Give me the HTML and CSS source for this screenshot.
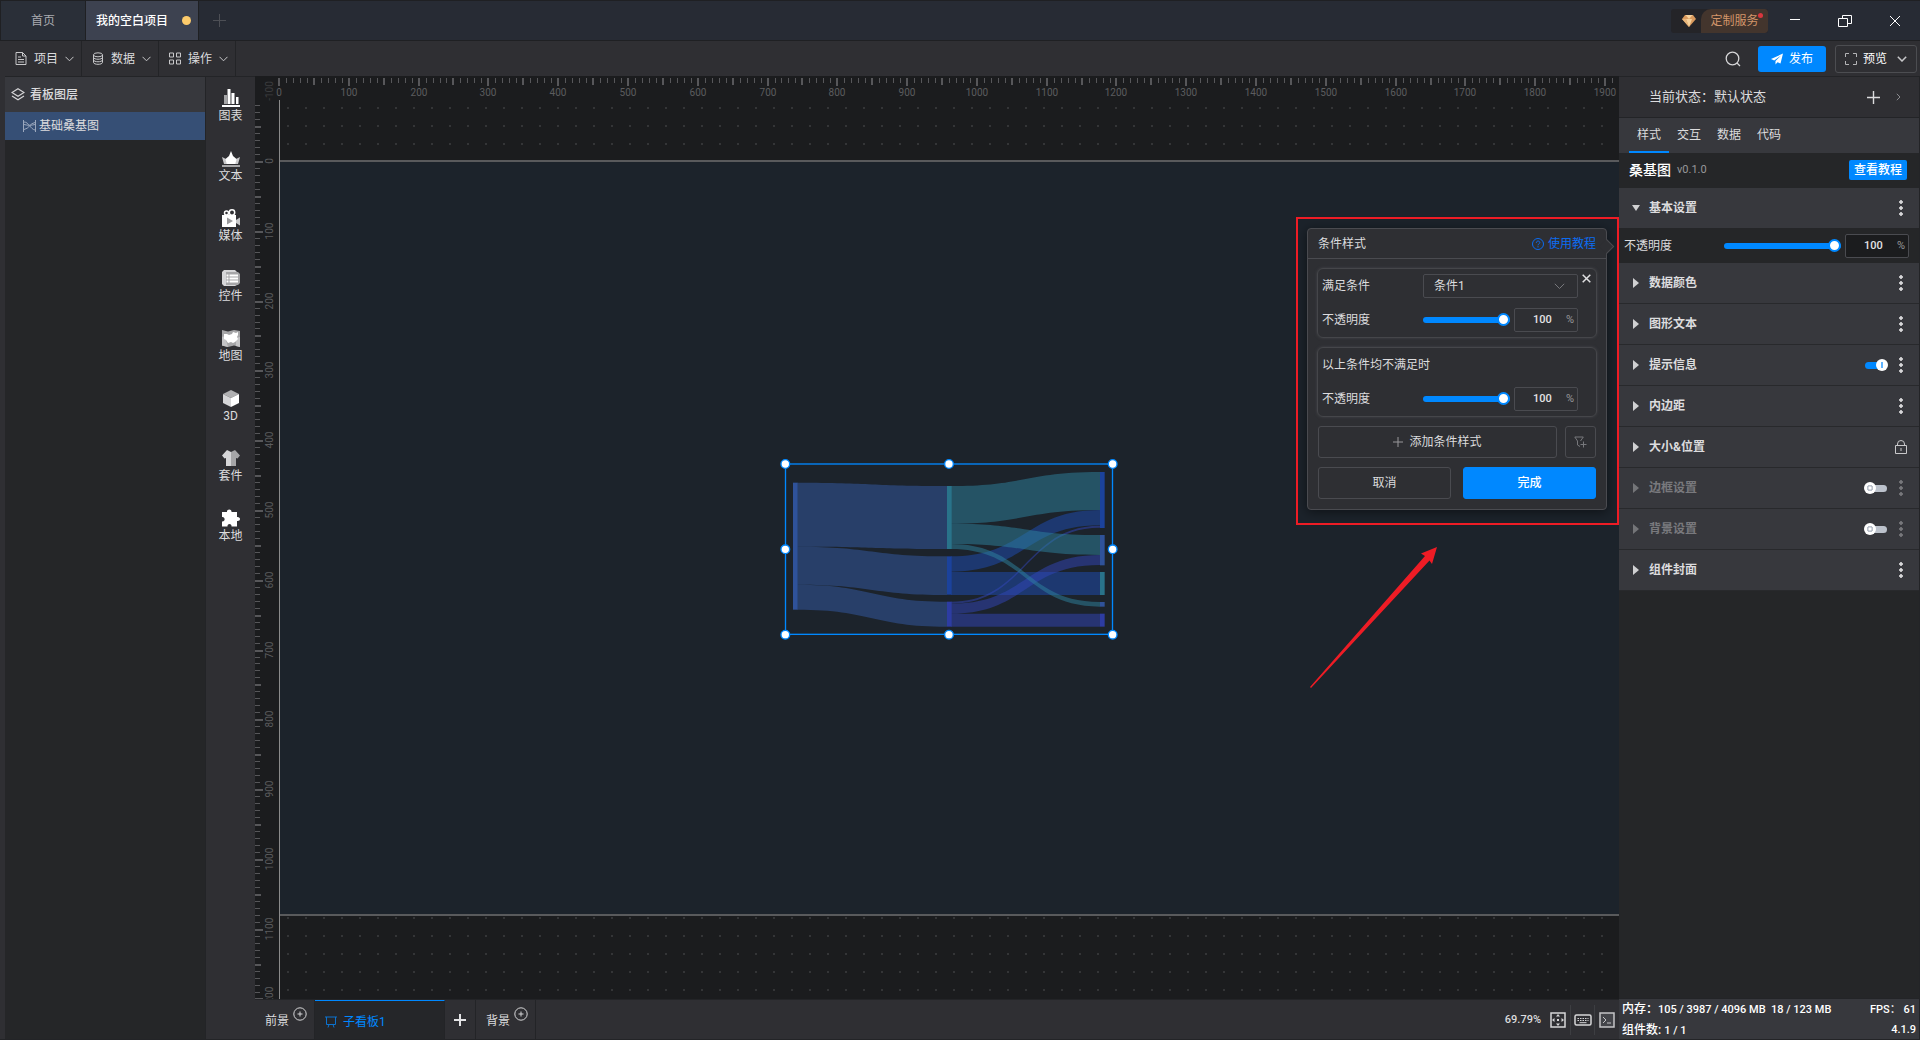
FILE: index.html
```html
<!DOCTYPE html>
<html lang="zh-CN">
<head>
    <meta charset="UTF-8">
    <meta name="viewport" content="width=device-width, initial-scale=1.0">
    <title>我的空白项目</title>
    <link rel="stylesheet" href="styles.css">
</head>
<body>
    <header class="titlebar">
        <button class="file-tab">首页</button>
        <button class="file-tab active">我的空白项目<span class="unsaved"></span></button>
        <button class="new-tab" aria-label="新建">
            <svg width="13" height="13" viewBox="0 0 13 13"><path d="M6.5 0v13M0 6.5h13" stroke="#4d4f55" fill="none"/></svg>
        </button>
        <div class="spacer"></div>
        <button class="service">
            <span class="service-gem">
                <svg width="14" height="12" viewBox="0 0 14 12"><path d="M3 0h8l3 4-7 8-7-8z" fill="#d99a5e"/><path d="M3.500 0h7L7 4zM4 4h6l-3 8z" fill="#f7d29c"/><path d="M0 4h4l3 8z" fill="#e8b67c"/></svg>
            </span>
            <span class="service-text">定制服务</span>
            <span class="service-dot"></span>
        </button>
        <button class="win-btn" aria-label="最小化">
            <svg width="14" height="14" viewBox="0 0 14 14"><path d="M2 5.500h10" stroke="#fff"/></svg>
        </button>
        <button class="win-btn" aria-label="还原">
            <svg width="14" height="14" viewBox="0 0 14 14" fill="none" stroke="#fff"><path d="M.5 4.500h9v8h-9zM4.500 4.500v-3h9v8h-4"/></svg>
        </button>
        <button class="win-btn" aria-label="关闭">
            <svg width="14" height="14" viewBox="0 0 14 14"><path d="M2 2l10 10M12 2L2 12" stroke="#fff"/></svg>
        </button>
    </header>

    <nav class="toolbar">
        <button class="menu-btn">
            <svg width="12" height="13" viewBox="0 0 12 13" fill="none" stroke="#c8c8ca"><path d="M1 .5h6.500L11 4v8.500H1zM7.500.5V4H11M3 5h3M3 7.500h6M3 10h6"/></svg>
            项目
            <svg class="chev" width="9" height="6" viewBox="0 0 9 6"><path d="M.5.8l4 4 4-4"/></svg>
        </button>
        <button class="menu-btn">
            <svg width="12" height="13" viewBox="0 0 12 13" fill="none" stroke="#c8c8ca"><ellipse cx="6" cy="2.800" rx="4.500" ry="2"/><path d="M1.500 2.800v7.500c0 2.700 9 2.700 9 0V2.800M1.500 5.300c0 2.600 9 2.600 9 0M1.500 7.800c0 2.600 9 2.600 9 0"/></svg>
            数据
            <svg class="chev" width="9" height="6" viewBox="0 0 9 6"><path d="M.5.8l4 4 4-4"/></svg>
        </button>
        <button class="menu-btn">
            <svg width="12" height="13" viewBox="0 0 12 13" fill="none" stroke="#c8c8ca"><path d="M.5 1h4v4h-4zM7.500 1h4v4h-4zM.5 8h4v4h-4zM7.500 8h4v4h-4z"/></svg>
            操作
            <svg class="chev" width="9" height="6" viewBox="0 0 9 6"><path d="M.5.8l4 4 4-4"/></svg>
        </button>
        <div class="spacer"></div>
        <button class="search-btn" aria-label="搜索">
            <svg width="16" height="16" viewBox="0 0 16 16" fill="none" stroke="#d6d6d8" stroke-width="1.300"><circle cx="7.500" cy="7.500" r="6.300"/><path d="M12 12l3 3"/></svg>
        </button>
        <button class="publish-btn">
            <svg width="12" height="12" viewBox="0 0 12 12" fill="#fff"><path d="M12 .5L0 6l3.200 1.400L10 2.500 4.500 8v3.500l2-2.200L9.500 10.500z"/></svg>
            发布
        </button>
        <button class="preview-btn">
            <svg width="12" height="12" viewBox="0 0 12 12" fill="none" stroke="#b4b4b6"><path d="M.5 4V.5H4M8 .5h3.500V4M11.500 8v3.500H8M4 11.500H.5V8"/></svg>
            预览
            <svg class="chev strong" width="10" height="6" viewBox="0 0 10 6"><path d="M.8.8L5 5 9.200.8"/></svg>
        </button>
    </nav>

    <main class="workspace">
        <aside class="layers">
            <h2 class="layers-title">
                <svg width="14" height="13" viewBox="0 0 14 13" fill="none" stroke="#d6d6d8" stroke-width="1.200"><path d="M7 .8l6 3.700-6 3.700-6-3.700zM1 8l6 3.700L13 8"/></svg>
                看板图层
            </h2>
            <button class="layer-item">
                <svg width="13" height="12" viewBox="0 0 13 12" fill="none" stroke="#9aa7bd"><path d="M.5 0v12M12.500 0v12M1 2c5 0 6 7 11 8M1 9.500C6 9 7 3 12 2.500M1 4.500c4 1 7 1 11 0"/></svg>
                基础桑基图
            </button>
        </aside>

        <nav class="rail">
            <button class="rail-item">
                <svg width="18" height="18" viewBox="0 0 18 18"><path d="M0 16h18v2H0z" fill="#fff"/><path d="M2 6h3v9H2zM9 4h3v11H9z" fill="#a6a6a8"/><path d="M5.500 0h3v15h-3zM10 4h2.500v11H10zM14 8h2.500v7H14z" fill="#fff"/></svg>
                图表
            </button>
            <button class="rail-item">
                <svg width="18" height="18" viewBox="0 0 18 18"><path d="M0 16h18v2H0z" fill="#a6a6a8"/><path d="M0 8l4 2 1 5H2zM18 8l-4 2-1 5h3z" fill="#c9c9cb"/><path d="M9 2l2 5 3.500 3-1 5h-9l-1-5L7 7z" fill="#fff"/></svg>
                文本
            </button>
            <button class="rail-item">
                <svg width="18" height="18" viewBox="0 0 18 18"><g fill="none" stroke="#fff" stroke-width="1.500"><circle cx="4.500" cy="4" r="2"/><circle cx="10" cy="3.500" r="2.700"/></g><path d="M0 6h14v12H0z" fill="#fff"/><path d="M14 11l4-2.500v8L14 14z" fill="#c9c9cb"/><path d="M5 8.500l6 3.500-6 3.500z" fill="#9a9a9c"/></svg>
                媒体
            </button>
            <button class="rail-item">
                <svg width="18" height="18" viewBox="0 0 18 18"><path d="M2 1h11l2 2v13l-2 1H2l-2-2V3z" fill="#d6d6d8"/><path d="M4 3h12l2 2v9l-2 2H4z" fill="#a6a6a8"/><path d="M4.500 5.500h2v2h-2zM7.500 5.500H16v2H7.500zM4.500 8.500h2v2h-2zM7.500 8.500H16v2H7.500zM4.500 11.500h2v2h-2zM7.500 11.500H16v2H7.500z" fill="#fff"/></svg>
                控件
            </button>
            <button class="rail-item">
                <svg width="18" height="18" viewBox="0 0 18 18"><path d="M0 1l6 1.500L12 1l6 1v16l-6-1.500L6 18l-6-1.500z" fill="#a6a6a8"/><path d="M0 8c3-2 4 3 6 10l-6-1.500zM14 9l4-1v10l-4-1z" fill="#c4c4c6"/><path d="M2 5h3l2 1 3-1 1-2 3 1 2-1v3l-1 2 1 2-3 3-2 1-2-1-3 1-2-3-2-1z" fill="#fff"/></svg>
                地图
            </button>
            <button class="rail-item">
                <svg width="18" height="18" viewBox="0 0 18 18"><path d="M9 1l8 4-8 4-8-4z" fill="#b0b0b2"/><path d="M1 5l8 4v9l-8-4z" fill="#d6d6d8"/><path d="M17 5L9 9v9l8-4z" fill="#fff"/></svg>
                3D
            </button>
            <button class="rail-item">
                <svg width="18" height="18" viewBox="0 0 18 18"><path d="M5 1l4 2v14H4V9L2.500 9.500 0 6.500z" fill="#d6d6d8"/><path d="M13 1L9 3v14h5V9l1.500.5L18 6.500z" fill="#a6a6a8"/></svg>
                套件
            </button>
            <button class="rail-item">
                <svg width="18" height="18" viewBox="0 0 18 18"><path d="M0 3h5c-.5-3.500 5-3.500 4.500 0H15v5c4-.5 4 4.500 0 4v5.500H9.500c.5-3.500-4.500-3.500-4 0H0v-5c3.500.5 3.500-5 0-4.500z" fill="#fff"/></svg>
                本地
            </button>
        </nav>

        <section class="center">
            <div class="canvas" id="canvas">
                <div class="grid"></div>
                <div class="board"></div>
                <svg class="ruler-x" id="ruler-x"></svg>
                <svg class="ruler-y" id="ruler-y"></svg>

                <svg class="sankey" viewBox="0 0 1140 660">
                    <g id="links"></g>
                    <g id="nodes"></g>
                    <rect x="76.500" y="72" width="981" height="511" fill="none" stroke="#0088ff" stroke-width="4"/>
                    <g fill="#fff" stroke="#0088ff" stroke-width="4">
                        <circle cx="76" cy="72" r="13"/><circle cx="567" cy="72" r="13"/><circle cx="1058" cy="72" r="13"/>
                        <circle cx="76" cy="328" r="13"/><circle cx="1058" cy="328" r="13"/>
                        <circle cx="76" cy="584" r="13"/><circle cx="567" cy="584" r="13"/><circle cx="1058" cy="584" r="13"/>
                    </g>
                </svg>

                <form class="popup">
                    <div class="popup-head">
                        <span>条件样式</span>
                        <a href="#">
                            <svg width="12" height="12" viewBox="0 0 12 12" fill="none" stroke="#0c6cf2"><circle cx="6" cy="6" r="5.500"/><path d="M4.300 4.800c0-2.400 3.500-2.200 3.500-.2C7.800 5.800 6 5.800 6 7.300M6 8.200v1.200"/></svg>
                            使用教程
                        </a>
                    </div>
                    <div class="popup-body">
                        <div class="cond">
                            <div class="cond-row">
                                <label for="cond">满足条件</label>
                                <div class="select-wrap">
                                    <select id="cond"><option>条件1</option></select>
                                    <svg width="11" height="7" viewBox="0 0 11 7" fill="none" stroke="#77787c"><path d="M.8.8l4.700 4.700L10.200.8"/></svg>
                                </div>
                            </div>
                            <div class="cond-row">
                                <label for="op1">不透明度</label>
                                <input class="slider" id="op1" type="range" value="100">
                                <span class="num"><input type="text" value="100" aria-label="不透明度">%</span>
                            </div>
                            <button class="cond-close" type="button" aria-label="删除">
                                <svg width="9" height="9" viewBox="0 0 9 9"><path d="M.7.7l7.600 7.600M8.300.7L.7 8.300" stroke="#e0e0e2" stroke-width="1.500"/></svg>
                            </button>
                        </div>
                        <div class="cond">
                            <div class="cond-row">以上条件均不满足时</div>
                            <div class="cond-row">
                                <label for="op2">不透明度</label>
                                <input class="slider" id="op2" type="range" value="100">
                                <span class="num"><input type="text" value="100" aria-label="不透明度">%</span>
                            </div>
                        </div>
                        <div class="popup-actions">
                            <button class="btn" type="button">
                                <svg width="10" height="10" viewBox="0 0 10 10"><path d="M5 0v10M0 5h10" stroke="#98989b"/></svg>
                                添加条件样式
                            </button>
                            <button class="btn btn-icon" type="button" aria-label="筛选">
                                <svg width="13" height="12" viewBox="0 0 13 12" fill="none" stroke="#77787c"><path d="M6 10.500L3.500 9V5L.8 1h8.500L6.500 5M9.500 5.500v6M6.500 8.500h6"/></svg>
                            </button>
                        </div>
                        <div class="popup-actions wide">
                            <button class="btn" type="button">取消</button>
                            <button class="btn primary" type="button">完成</button>
                        </div>
                    </div>
                </form>
                <div class="frame"></div>
                <svg class="arrow" viewBox="0 0 128 142"><path d="M0 140L115 9l-4-2.500L127 0l-5 17-2.500-3.500L1 141z" fill="#ee1c25"/></svg>
            </div>

            <footer class="boards">
                <button class="board-tab">前景
                    <svg class="add-mark" width="14" height="14" viewBox="0 0 14 14" fill="none" stroke="#d6d6d8"><circle cx="7" cy="7" r="6.200"/><path d="M7 4.500v5M4.500 7h5"/></svg>
                </button>
                <button class="board-tab current">
                    <svg width="12" height="12" viewBox="0 0 12 12" fill="none" stroke="#0c73d0"><path d="M0 1h12M1.500 1v7.500h9V1M4 8.500L3 11.500M8 8.500l1 3"/></svg>
                    子看板1
                </button>
                <button class="board-tab" aria-label="新建看板">
                    <svg width="12" height="12" viewBox="0 0 12 12"><path d="M6 0v12M0 6h12" stroke="#e4e4e6" stroke-width="2"/></svg>
                </button>
                <button class="board-tab">背景
                    <svg class="add-mark" width="14" height="14" viewBox="0 0 14 14" fill="none" stroke="#d6d6d8"><circle cx="7" cy="7" r="6.200"/><path d="M7 4.500v5M4.500 7h5"/></svg>
                </button>
                <div class="spacer"></div>
                <span class="zoom">69.79%</span>
                <button class="view-btn" aria-label="适应画布">
                    <svg width="16" height="16" viewBox="0 0 16 16"><path d="M1 1h14v14H1z" fill="none" stroke="#d6d6d8" stroke-width="1.500"/><path d="M8 2l2 2.500H6zM8 14l2-2.500H6zM2 8l2.500-2v4zM14 8l-2.500-2v4zM7 7h2v2H7z" fill="#d6d6d8"/></svg>
                </button>
                <button class="view-btn" aria-label="快捷键">
                    <svg width="18" height="12" viewBox="0 0 18 12" fill="none" stroke="#d6d6d8"><rect x="1" y="1" width="16" height="10" rx="1.500" stroke-width="1.500"/><path d="M3.500 4.500h11M3.500 6.500h11" stroke-width="1.200" stroke-dasharray="1.500 1"/><path d="M5.500 8.700h7"/></svg>
                </button>
                <button class="view-btn" aria-label="控制台">
                    <svg width="16" height="16" viewBox="0 0 16 16" fill="none" stroke="#c4c4c6"><path d="M1 1h14v14H1z" stroke-width="1.500" fill="#44454a"/><path d="M4 5l3 3-3 3M8 11h4"/></svg>
                </button>
            </footer>
        </section>

        <aside class="props">
            <div class="state">
                <span>当前状态：</span><span>默认状态</span>
                <div class="spacer"></div>
                <button aria-label="添加状态"><svg width="13" height="13" viewBox="0 0 13 13"><path d="M6.500 0v13M0 6.500h13" stroke="#dcdcde" stroke-width="1.400"/></svg></button>
                <button aria-label="展开"><svg width="5" height="8" viewBox="0 0 5 8" fill="none" stroke="#8a8b8f"><path d="M.8.8L4 4 .8 7.200"/></svg></button>
            </div>
            <div class="tabs">
                <button class="active">样式</button>
                <button>交互</button>
                <button>数据</button>
                <button>代码</button>
            </div>
            <div class="comp">
                <h3>桑基图</h3>
                <span>v0.1.0</span>
                <div class="spacer"></div>
                <button>查看教程</button>
            </div>

            <div class="group open">
                <button class="group-name">基本设置</button>
                <button class="more" aria-label="更多"></button>
            </div>
            <div class="opacity-row">
                <label for="op">不透明度</label>
                <input class="slider" id="op" type="range" value="100">
                <span class="num"><input type="text" value="100" aria-label="不透明度">%</span>
            </div>
            <div class="group">
                <button class="group-name">数据颜色</button>
                <button class="more" aria-label="更多"></button>
            </div>
            <div class="group">
                <button class="group-name">图形文本</button>
                <button class="more" aria-label="更多"></button>
            </div>
            <div class="group">
                <button class="group-name">提示信息</button>
                <input class="switch" type="checkbox" aria-label="提示信息" checked>
                <button class="more" aria-label="更多"></button>
            </div>
            <div class="group">
                <button class="group-name">内边距</button>
                <button class="more" aria-label="更多"></button>
            </div>
            <div class="group">
                <button class="group-name">大小&amp;位置</button>
                <button class="lock" aria-label="锁定">
                    <svg width="12" height="14" viewBox="0 0 12 14" fill="none" stroke="#c8c8ca"><path d="M.5 5.500h11v8H.5zM2.500 5.500V4a3.500 3.500 0 017 0v1.500M6 8v3"/></svg>
                </button>
            </div>
            <div class="group off">
                <button class="group-name">边框设置</button>
                <input class="switch" type="checkbox" aria-label="边框设置">
                <button class="more" aria-label="更多"></button>
            </div>
            <div class="group off">
                <button class="group-name">背景设置</button>
                <input class="switch" type="checkbox" aria-label="背景设置">
                <button class="more" aria-label="更多"></button>
            </div>
            <div class="group">
                <button class="group-name">组件封面</button>
                <button class="more" aria-label="更多"></button>
            </div>

            <footer class="stats">
                <div><span>内存：<b>105 / 3987 / 4096 MB&nbsp; 18 / 123 MB</b></span><span><b>FPS：&nbsp;61</b></span></div>
                <div><span>组件数: <b>1 / 1</b></span><b>4.1.9</b></div>
            </footer>
        </aside>
    </main>

    <script>
        const NS = 'http://www.w3.org/2000/svg';
        const step = 6.979; // 10 units at 69.79% zoom

        function add(parent, tag, attrs, text) {
            const el = document.createElementNS(NS, tag);
            for (const key in attrs) el.setAttribute(key, attrs[key]);
            if (text) el.textContent = text;
            parent.appendChild(el);
        }

        function drawRulers() {
            const canvas = document.getElementById('canvas');
            const rx = document.getElementById('ruler-x');
            const ry = document.getElementById('ruler-y');
            rx.innerHTML = '';
            ry.innerHTML = '';

            for (let i = 0; 24 + i * step < canvas.clientWidth; i++) {
                const x = Math.round(24 + i * step);
                const big = i % 5 === 0;
                const len = i % 10 === 0 ? 8 : big ? 7 : 5;
                add(rx, 'rect', { x: x - (big ? 1 : 0), y: 2, width: big ? 2 : 1, height: len, class: 'tick' });
                if (i % 10 === 0) {
                    add(rx, 'text', { x: x, y: 20, class: 'tick-label' }, String(i * 10));
                }
            }

            for (let i = -10; 85 + (i - 1) * step < canvas.clientHeight; i++) {
                const y = Math.round(85 + i * step);
                const big = i % 5 === 0;
                const len = i % 10 === 0 ? 8 : big ? 6 : 5;
                if (i > -9) add(ry, 'rect', { x: 0, y: y, width: len, height: big ? 2 : 1, class: 'tick' });
                if (i % 10 === 0) {
                    add(ry, 'text', { transform: `translate(18 ${y}) rotate(-90)`, class: i < 0 ? 'tick-label faint' : 'tick-label' }, String(i * 10));
                }
            }
        }

        // x0, x1, source top/bottom, target top/bottom, colour
        const links = [
            [112, 561, 128, 320, 138, 327, '#345ba7'],
            [112, 561, 320, 434, 349, 465, '#345ba7'],
            [112, 561, 434, 509, 485, 560, '#345ba7'],
            [573, 1020, 349, 395, 210, 256, '#1e4db5'],
            [573, 1020, 396, 465, 396, 465, '#1e4db5'],
            [573, 1020, 485, 491, 257, 263, '#3245b9'],
            [573, 1020, 491, 521, 345, 375, '#3245b9'],
            [573, 1020, 521, 560, 521, 560, '#3245b9'],
            [573, 1020, 138, 251, 96, 210, '#2e839f'],
            [573, 1020, 251, 312, 285, 345, '#2e839f'],
            [573, 1020, 312, 327, 486, 500, '#2e839f']
        ];

        // x, top, bottom, colour
        const nodes = [
            [99, 128, 509, '#2f529a'],
            [561, 138, 327, '#29738a'],
            [561, 349, 464, '#1b429c'],
            [561, 485, 560, '#2d3ca2'],
            [1020, 96, 264, '#1b429c'],
            [1020, 285, 376, '#2f529a'],
            [1020, 396, 465, '#29738a'],
            [1020, 486, 500, '#2f529a'],
            [1020, 521, 560, '#2d3ca2']
        ];

        function drawSankey() {
            const linkLayer = document.getElementById('links');
            const nodeLayer = document.getElementById('nodes');
            links.forEach(([x0, x1, a, b, c, d, fill]) => {
                const m = (x0 + x1) / 2;
                add(linkLayer, 'path', {
                    d: `M${x0} ${a}C${m} ${a} ${m} ${c} ${x1} ${c}V${d}C${m} ${d} ${m} ${b} ${x0} ${b}Z`,
                    fill: fill,
                    'fill-opacity': 0.5
                });
            });
            nodes.forEach(([x, top, bottom, fill]) => {
                add(nodeLayer, 'rect', { x: x, y: top, width: 14, height: bottom - top, fill: fill });
            });
        }

        drawRulers();
        drawSankey();
        window.addEventListener('resize', drawRulers);
    </script>
</body>
</html>
```
FILE: styles.css
```css
* {
    box-sizing: border-box;
}
body {
    margin: 0;
    height: 100vh;
    display: flex;
    flex-direction: column;
    overflow: hidden;
    background: #2f2f33;
    color: #dcdcde;
    font: 12px/18px Roboto, "Noto Sans CJK SC", sans-serif;
}
button, input, select {
    font: inherit;
    color: inherit;
    background: none;
    border: 0;
    padding: 0;
    margin: 0;
}
button {
    cursor: pointer;
}
svg {
    display: block;
    flex: none;
}
a {
    text-decoration: none;
}
.spacer {
    flex: 1;
}

/* title bar */
.titlebar {
    display: flex;
    flex: none;
    height: 41px;
    background: #272b34;
    border: 1px solid #1f2023;
    border-right: 0;
}
.file-tab {
    width: 85px;
    background: #2a2f38;
    border-right: 1px solid #1f2023;
    color: #a9abb0;
}
.file-tab.active {
    display: flex;
    align-items: center;
    justify-content: space-between;
    width: 113px;
    padding: 0 7px 0 10px;
    background: #3d4250;
    color: #fff;
    font-weight: 500;
}
.unsaved {
    width: 9px;
    height: 9px;
    border-radius: 50%;
    background: #fdcb6b;
}
.new-tab {
    display: grid;
    place-items: center;
    width: 40px;
}
.service {
    position: relative;
    display: flex;
    align-self: center;
    height: 24px;
    width: 97px;
    margin-right: 2px;
    border-radius: 3px;
    background: #242428;
    overflow: hidden;
}
.service-gem {
    display: grid;
    place-items: center;
    width: 36px;
}
.service-text {
    flex: 1;
    line-height: 24px;
    background: #43352d;
    border-radius: 10px 3px 3px 0;
    margin-left: -6px;
    color: #d3966a;
}
.service-dot {
    position: absolute;
    top: 4px;
    right: 5px;
    width: 5px;
    height: 5px;
    border-radius: 50%;
    background: #d9363e;
}
.win-btn {
    display: grid;
    place-items: center;
    width: 50px;
}

/* toolbar */
.toolbar {
    display: flex;
    flex: none;
    align-items: center;
    height: 35px;
    padding-right: 3px;
    padding-left: 5px;
}
.menu-btn {
    display: flex;
    align-items: center;
    justify-content: center;
    gap: 7px;
    height: 35px;
    width: 77px;
    padding-left: 3px;
    border-right: 1px solid #232427;
}
.chev {
    margin-left: 2px;
    fill: none;
    stroke: #c8c8ca;
}
.menu-btn .chev {
    margin-left: 0;
}
.chev.strong {
    margin-left: 4px;
    stroke-width: 1.5px;
}
.search-btn {
    margin-right: 17px;
}
.publish-btn, .preview-btn {
    display: flex;
    align-items: center;
    justify-content: center;
    gap: 6px;
    height: 26px;
    width: 68px;
    border-radius: 3px;
    background: #0088ff;
    color: #fff;
}
.preview-btn {
    height: 28px;
    width: 82px;
    margin-left: 9px;
    border: 1px solid #4c4d51;
    background: none;
}

/* work area */
.workspace {
    display: flex;
    flex: 1;
    min-height: 0;
    padding-left: 5px;
    border-right: 1px solid #232427;
    border-bottom: 1px solid #232427;
}
.layers {
    flex: none;
    width: 201px;
    background: #252628;
    border-top: 1px solid #232427;
    border-right: 1px solid #232427;
}
.layers-title {
    display: flex;
    align-items: center;
    gap: 5px;
    height: 35px;
    margin: 0;
    padding-left: 6px;
    background: #37383d;
    font-size: 12px;
    font-weight: 500;
}
.layer-item {
    display: flex;
    align-items: center;
    gap: 3px;
    width: 100%;
    height: 28px;
    padding-left: 18px;
    background: #364f75;
}
.rail {
    flex: none;
    width: 49px;
    border-top: 1px solid #232427;
}
.rail-item {
    display: flex;
    flex-direction: column;
    align-items: center;
    width: 100%;
    height: 60px;
    padding-top: 12px;
}
.center {
    display: flex;
    flex: 1;
    flex-direction: column;
    min-width: 0;
}

/* canvas */
.canvas {
    position: relative;
    flex: 1;
    background: #1b1c1e;
    overflow: hidden;
}
.grid {
    position: absolute;
    inset: 24px 0 0 24px;
    background: conic-gradient(from 90deg at 16px 16px, #343537 25%, transparent 0) 9px 9px / 18px 18px;
    border-left: 1px solid #8a8a8a;
}
.board {
    position: absolute;
    left: 25px;
    right: 0;
    top: 84px;
    height: 756px;
    background: #1c232b;
    border-top: 2px solid #595a5c;
    border-bottom: 2px solid #595a5c;
}
.ruler-x {
    position: absolute;
    top: 0;
    left: 0;
    width: 100%;
    height: 24px;
}
.ruler-y {
    position: absolute;
    top: 0;
    left: 0;
    width: 24px;
    height: 100%;
}
.tick {
    fill: #57575a;
}
.tick-label {
    fill: #5c5c5f;
    font-size: 10px;
    text-anchor: middle;
}
.tick-label.faint {
    opacity: 0.5;
}
.sankey {
    position: absolute;
    left: 505px;
    top: 364px;
    width: 380px;
    height: 220px;
}
.frame {
    position: absolute;
    right: 0;
    top: 141px;
    width: 323px;
    height: 308px;
    border: 2px solid #ee1c25;
}
.arrow {
    position: absolute;
    right: 181px;
    top: 471px;
    width: 128px;
    height: 142px;
}

/* condition popup */
.popup {
    position: absolute;
    right: 12px;
    top: 152px;
    width: 300px;
    background: #2e2f33;
    border: 1px solid #4a4b50;
    border-radius: 4px;
    box-shadow: 0 2px 12px rgba(0, 0, 0, 0.5);
}
.popup::after {
    content: "";
    position: absolute;
    right: -6px;
    top: 12px;
    width: 10px;
    height: 10px;
    background: #2e2f33;
    border-top: 1px solid #4a4b50;
    border-right: 1px solid #4a4b50;
    transform: rotate(45deg);
}
.popup-head {
    display: flex;
    align-items: center;
    justify-content: space-between;
    height: 30px;
    padding: 0 10px;
    border-bottom: 1px solid #4a4b50;
}
.popup-head a {
    display: flex;
    align-items: center;
    gap: 4px;
    color: #0c6cf2;
}
.popup-body {
    display: flex;
    flex-direction: column;
    gap: 9px;
    padding: 9px 10px 10px;
}
.cond {
    position: relative;
    margin: 0 -1px;
    padding: 0 18px 0 4px;
    border: 1px solid #45464a;
    border-radius: 6px;
    box-shadow: 0 0 3px #45464a;
}
.cond-row {
    display: flex;
    align-items: center;
    height: 34px;
}
.cond-row label {
    width: 101px;
}
.cond-close {
    position: absolute;
    top: 5px;
    right: 5px;
}
.select-wrap {
    display: flex;
    flex: 1;
    align-items: center;
    height: 24px;
    padding: 0 12px 0 10px;
    border: 1px solid #4a4b50;
    border-radius: 2px;
}
.select-wrap select {
    flex: 1;
    appearance: none;
}
.slider {
    flex: 1;
    min-width: 0;
    height: 14px;
    margin-right: 4px;
    appearance: none;
}
.slider::-webkit-slider-runnable-track {
    height: 6px;
    border-radius: 3px;
    background: #0088ff;
}
.slider::-webkit-slider-thumb {
    appearance: none;
    width: 13px;
    height: 13px;
    margin-top: -4px;
    border: 2px solid #0088ff;
    border-radius: 50%;
    background: #fff;
}
.num {
    display: flex;
    align-items: center;
    width: 64px;
    height: 24px;
    padding-right: 3px;
    border: 1px solid #4a4b50;
    border-radius: 2px;
    color: #98989b;
    font-size: 11px;
}
.num input {
    flex: 1;
    min-width: 0;
    padding-left: 4px;
    color: #e4e4e6;
    font-weight: 500;
    text-align: center;
}
.popup-actions {
    display: grid;
    grid-template-columns: 1fr 31px;
    gap: 8px;
}
.popup-actions.wide {
    grid-template-columns: 1fr 1fr;
    gap: 12px;
}
.btn {
    display: flex;
    align-items: center;
    justify-content: center;
    gap: 6px;
    height: 32px;
    border: 1px solid #4a4b50;
    border-radius: 3px;
}
.btn.primary {
    background: #0088ff;
    border-color: #0088ff;
    color: #fff;
    font-weight: 500;
}

/* board tabs */
.boards {
    display: flex;
    flex: none;
    align-items: center;
    height: 40px;
    border-top: 1px solid #232427;
    padding-right: 1px;
}
.board-tab {
    display: flex;
    align-items: center;
    height: 100%;
    padding: 3px 7px 0 10px;
    border-right: 1px solid #232427;
    gap: 4px;
}
.board-tab:nth-child(3) {
    padding: 0 9px;
}
.board-tab.current {
    width: 130px;
    gap: 6px;
    background: #252629;
    border-top: 1px solid #0088ff;
    color: #0088ff;
}
.add-mark {
    margin-bottom: 14px;
}
.zoom {
    margin-right: 5px;
    font-size: 11px;
    font-weight: 500;
}
.view-btn {
    display: grid;
    place-items: center;
    width: 24px;
    height: 30px;
}
.view-btn + .view-btn {
    border-left: 1px solid #3d3e42;
}

/* property panel */
.props {
    display: flex;
    flex: none;
    flex-direction: column;
    width: 300px;
    background: #252628;
}
.state {
    display: flex;
    align-items: center;
    height: 42px;
    padding: 0 18px 0 30px;
    background: #2f2f33;
    border-top: 1px solid #232427;
    border-bottom: 1px solid #232427;
    font-size: 13px;
}
.state button + button {
    margin-left: 16px;
}
.tabs {
    display: flex;
    height: 35px;
    padding-left: 10px;
    background: #37383d;
}
.tabs button {
    width: 40px;
    border-bottom: 2px solid transparent;
}
.tabs .active {
    border-bottom-color: #0088ff;
}
.comp {
    display: flex;
    align-items: center;
    gap: 6px;
    height: 35px;
    padding: 0 12px 2px 10px;
}
.comp h3 {
    margin: 0;
    color: #fff;
    font-size: 14px;
    font-weight: 500;
}
.comp span {
    color: #98989b;
    font-size: 11px;
}
.comp button {
    width: 58px;
    height: 20px;
    border-radius: 2px;
    background: #0088ff;
    color: #fff;
    font-weight: 500;
}
.group {
    display: flex;
    align-items: center;
    height: 41px;
    padding: 0 10px 0 14px;
    background: #37383d;
    border-bottom: 1px solid #28292c;
}
.group.open {
    height: 40px;
    border-bottom: 0;
}
.group-name {
    display: flex;
    flex: 1;
    align-items: center;
    gap: 10px;
    font-weight: 700;
}
.group-name::before {
    content: "";
    width: 6px;
    height: 10px;
    background: #d0d0d2;
    clip-path: polygon(0 0, 100% 50%, 0 100%);
}
.group.open .group-name::before {
    width: 8px;
    height: 6px;
    margin-right: -1px;
    margin-left: -1px;
    clip-path: polygon(0 0, 100% 0, 50% 100%);
}
.more {
    width: 16px;
    height: 18px;
    background: radial-gradient(circle, #d6d6d8 1.5px, transparent 2px) center / 6px 6px repeat-y;
}
.lock {
    padding: 0 2px;
}
.off .group-name, .off .more {
    opacity: 0.4;
}
.switch {
    position: relative;
    width: 24px;
    height: 12px;
    margin-right: 5px;
    appearance: none;
}
.switch::before {
    content: "";
    position: absolute;
    inset: 3px 1px 2px;
    border-radius: 4px;
    background: #bcc2cc;
}
.switch::after {
    content: "";
    position: absolute;
    left: 0;
    top: 0;
    width: 12px;
    height: 12px;
    border-radius: 50%;
    background: radial-gradient(circle, #fff 1px, #bcc2cc 2px, #bcc2cc 3px, #fff 3px);
}
.switch:checked::before {
    background: #0088ff;
}
.switch:checked::after {
    left: auto;
    right: 0;
    background: linear-gradient(#5fb4ff, #5fb4ff) center / 2px 6px no-repeat #fff;
}
.opacity-row {
    display: flex;
    align-items: center;
    height: 35px;
    padding: 0 10px 0 5px;
}
.opacity-row label {
    width: 100px;
}
.opacity-row .num {
    background: #1b1c1e;
}
.stats {
    margin-top: auto;
    height: 41px;
    padding: 0 3px;
    background: #37383d;
    border-top: 1px solid #232427;
    color: #fff;
    font-weight: 500;
    line-height: 20px;
}
.stats div {
    display: flex;
    justify-content: space-between;
}
.stats b {
    font-size: 11px;
    font-weight: 500;
}
```
